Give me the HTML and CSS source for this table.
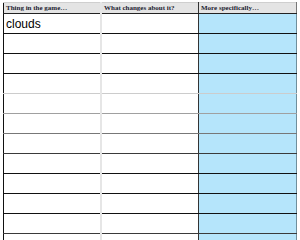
FILE: index.html
```html
<!DOCTYPE html>
<html>
<head>
<meta charset="utf-8">
<link rel="stylesheet" href="styles.css">
</head>
<body>
<table class="sheet">
  <thead>
    <tr>
      <th class="c1">Thing in the game…</th>
      <th class="c2">What changes about it?</th>
      <th class="c3">More specifically…</th>
    </tr>
  </thead>
  <tbody>
    <tr class="r-black"><td class="c1 entry">clouds</td><td class="c2"></td><td class="c3"></td></tr>
    <tr class="r-black"><td class="c1"></td><td class="c2"></td><td class="c3"></td></tr>
    <tr class="r-black"><td class="c1"></td><td class="c2"></td><td class="c3"></td></tr>
    <tr class="r-light"><td class="c1"></td><td class="c2"></td><td class="c3"></td></tr>
    <tr class="r-mid"><td class="c1"></td><td class="c2"></td><td class="c3"></td></tr>
    <tr class="r-grey"><td class="c1"></td><td class="c2"></td><td class="c3"></td></tr>
    <tr class="r-dark"><td class="c1"></td><td class="c2"></td><td class="c3"></td></tr>
    <tr class="r-black"><td class="c1"></td><td class="c2"></td><td class="c3"></td></tr>
    <tr class="r-black"><td class="c1"></td><td class="c2"></td><td class="c3"></td></tr>
    <tr class="r-black"><td class="c1"></td><td class="c2"></td><td class="c3"></td></tr>
    <tr class="r-dark"><td class="c1"></td><td class="c2"></td><td class="c3"></td></tr>
    <tr class="r-black"><td class="c1"></td><td class="c2"></td><td class="c3"></td></tr>
  </tbody>
</table>
</body>
</html>
```

FILE: styles.css
```css
html, body {
  margin: 0;
  padding: 0;
  background: #ffffff;
}

.sheet {
  margin: 2px 0 0 3px;
  border-collapse: collapse;
  table-layout: fixed;
  border-top: 1px solid #cfcfcf;
  border-left: 1px solid #111111;
}

.sheet th,
.sheet td {
  padding: 0 0 0 2px;
  text-align: left;
  vertical-align: middle;
}

.sheet th {
  height: 10px;
  background: #e4e4e4;
  font-family: "Liberation Serif", serif;
  font-weight: bold;
  font-size: 7px;
  line-height: 10px;
  color: #222230;
  border-bottom: 1px solid #222222;
  white-space: nowrap;
  overflow: hidden;
}

.sheet td {
  height: 19px;
  font-family: "Liberation Sans", sans-serif;
  font-size: 12px;
  color: #000000;
}

.c1 {
  width: 94px;
  border-right: 2px solid #e6e6e6;
}

.c2 {
  width: 94px;
  border-right: 1px solid #333333;
}

.c3 {
  width: 95px;
  border-right: 1px solid #6f8f9c;
}

td.c3 {
  background: #b5e5fb;
}

th.c3 {
  border-right-color: #777777;
}

.entry {
  vertical-align: top;
  line-height: 18px;
}

.r-black td { border-bottom: 1px solid #111111; }
.r-light td { border-bottom: 1px solid #cccccc; }
.r-mid td { border-bottom: 1px solid #a0a0a0; }
.r-grey td { border-bottom: 1px solid #777777; }
.r-dark td { border-bottom: 1px solid #3a3a3a; }
```
